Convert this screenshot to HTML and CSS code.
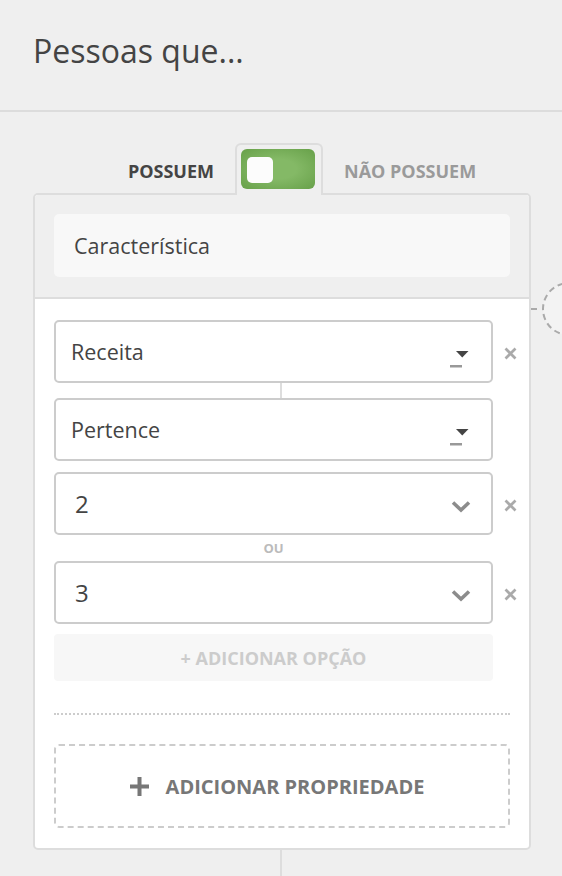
FILE: index.html
```html
<!DOCTYPE html>
<html lang="pt-BR">

<head>
    <meta charset="UTF-8">
    <meta name="viewport" content="width=device-width, initial-scale=1.0">
    <title>Pessoas que...</title>
    <link rel="stylesheet" href="styles.css">
</head>

<body>
    <header class="page-header">
        <h1>Pessoas que...</h1>
    </header>

    <main class="builder">
        <div class="switch-row">
            <span class="switch-label active">POSSUEM</span>
            <div class="switch-tab">
                <div class="switch"><span class="knob"></span></div>
            </div>
            <span class="switch-label">NÃO POSSUEM</span>
        </div>

        <section class="card">
            <div class="card-top">
                <div class="field">Característica</div>
            </div>

            <div class="card-body">
                <div class="select-row">
                    <div class="select">
                        <span>Receita</span>
                        <svg class="caret" width="19" height="17" viewBox="0 0 19 17">
                            <polygon points="6,0 18.5,0 12.25,6.5" fill="#444" />
                            <rect x="0" y="14" width="12" height="2.5" fill="#999" />
                        </svg>
                    </div>
                    <span class="remove">
                        <svg width="13" height="13" viewBox="0 0 13 13">
                            <path d="M1.5 1.5 L11.5 11.5 M11.5 1.5 L1.5 11.5" stroke="#aaa" stroke-width="2.7" />
                        </svg>
                    </span>
                </div>

                <div class="link"></div>

                <div class="select-row">
                    <div class="select">
                        <span>Pertence</span>
                        <svg class="caret" width="19" height="17" viewBox="0 0 19 17">
                            <polygon points="6,0 18.5,0 12.25,6.5" fill="#444" />
                            <rect x="0" y="14" width="12" height="2.5" fill="#999" />
                        </svg>
                    </div>
                </div>

                <div class="select-row spaced">
                    <div class="select number">
                        <span>2</span>
                        <svg class="chevron" width="20" height="13" viewBox="0 0 20 13">
                            <path d="M2 2.5 L10 10 L18 2.5" fill="none" stroke="#8c8c8c" stroke-width="3.6" />
                        </svg>
                    </div>
                    <span class="remove">
                        <svg width="13" height="13" viewBox="0 0 13 13">
                            <path d="M1.5 1.5 L11.5 11.5 M11.5 1.5 L1.5 11.5" stroke="#aaa" stroke-width="2.7" />
                        </svg>
                    </span>
                </div>

                <div class="or">OU</div>

                <div class="select-row">
                    <div class="select number">
                        <span>3</span>
                        <svg class="chevron" width="20" height="13" viewBox="0 0 20 13">
                            <path d="M2 2.5 L10 10 L18 2.5" fill="none" stroke="#8c8c8c" stroke-width="3.6" />
                        </svg>
                    </div>
                    <span class="remove">
                        <svg width="13" height="13" viewBox="0 0 13 13">
                            <path d="M1.5 1.5 L11.5 11.5 M11.5 1.5 L1.5 11.5" stroke="#aaa" stroke-width="2.7" />
                        </svg>
                    </span>
                </div>

                <div class="add-option">+ ADICIONAR OPÇÃO</div>

                <hr class="dotted">

                <div class="add-property">
                    <svg width="19" height="19" viewBox="0 0 19 19">
                        <rect x="7.5" y="0" width="4" height="19" fill="#777" />
                        <rect x="0" y="7.5" width="19" height="4" fill="#777" />
                    </svg>
                    <span>ADICIONAR PROPRIEDADE</span>
                </div>
            </div>
        </section>

        <div class="tail"></div>

        <!-- next node of the flow, cut off by the window -->
        <svg class="next-node" width="31" height="60" viewBox="0 0 31 60">
            <line x1="0" y1="29" x2="9" y2="29" stroke="#aaa" stroke-width="2" stroke-dasharray="6 4" />
            <circle cx="38" cy="29" r="26" fill="#f3f3f3" stroke="#aaa" stroke-width="2" stroke-dasharray="6 4" />
        </svg>
    </main>
</body>
</html>
```

FILE: styles.css
```css
* {
    box-sizing: border-box;
}

body {
    margin: 0;
    height: 876px;
    overflow: hidden;
    background-color: #efefef;
    font-family: "Open Sans", sans-serif;
    color: #444;
}

.page-header {
    height: 112px;
    padding: 0 33px;
    border-bottom: 2px solid #dcdcdc;
}

.page-header h1 {
    margin: 0;
    padding-top: 29px;
    font-size: 32px;
    font-weight: 400;
    line-height: 44px;
    color: #444;
}

.builder {
    position: relative;
    padding: 31px 31px 0 33px;
}

/* Possuem / Nao possuem switch */
.switch-row {
    display: grid;
    grid-template-columns: 1fr auto 1fr;
    align-items: center;
    column-gap: 21px;
    padding-right: 6px;
}

.switch-label {
    padding-top: 6px;
    font-size: 18px;
    font-weight: 700;
    line-height: 24px;
    color: #9a9a9a;
}

.switch-label.active {
    justify-self: end;
    color: #444;
}

.switch-tab {
    position: relative;
    z-index: 1;
    width: 88px;
    height: 52px;
    margin-bottom: -2px;
    padding: 4px;
    background-color: #efefef;
    border: 2px solid #ddd;
    border-bottom: none;
    border-radius: 6px 6px 0 0;
}

.switch {
    width: 74px;
    height: 40px;
    padding: 8px 0 0 6px;
    border-radius: 6px;
    background: radial-gradient(ellipse at center, #84b966 35%, #67a049 100%);
}

.knob {
    display: block;
    width: 26px;
    height: 26px;
    border-radius: 5px;
    background-color: #fcfcfc;
}

/* Card */
.card {
    overflow: hidden;
    background-color: #fff;
    border: 2px solid #ddd;
    border-radius: 5px;
}

.card-top {
    padding: 19px 19px 20px;
    background-color: #efefef;
    border-bottom: 2px solid #ddd;
}

.field {
    display: flex;
    align-items: center;
    height: 63px;
    padding-left: 20px;
    background-color: #f8f8f8;
    border-radius: 5px;
    font-size: 21.5px;
}

.card-body {
    padding: 21px 19px 20px;
}

.select-row {
    display: grid;
    grid-template-columns: 439px 1fr;
    align-items: center;
    margin-right: -19px;
}

.select-row.spaced {
    margin-top: 11px;
}

.select {
    display: flex;
    align-items: center;
    justify-content: space-between;
    height: 63px;
    padding: 0 22px 0 15px;
    border: 2px solid #ccc;
    border-radius: 5px;
    font-size: 21.5px;
}

.select .caret {
    margin-top: 15px;
}

.select.number {
    padding: 0 20px 0 19px;
    font-size: 24px;
}

.select .chevron {
    margin-top: 6px;
}

.remove {
    display: flex;
    justify-content: center;
    width: 34px;
    padding-top: 4px;
}

.link {
    width: 2px;
    height: 15px;
    margin: 0 auto 0 226px;
    background-color: #ddd;
}

.or {
    width: 439px;
    height: 26px;
    font-size: 13px;
    font-weight: 700;
    line-height: 26px;
    text-align: center;
    color: #bbb;
}

.add-option {
    display: flex;
    align-items: center;
    justify-content: center;
    width: 439px;
    height: 47px;
    margin-top: 10px;
    background-color: #f7f7f7;
    border-radius: 4px;
    font-size: 18px;
    font-weight: 700;
    color: #ccc;
}

.dotted {
    height: 0;
    margin: 32px 0 0;
    border: none;
    border-top: 2px dotted #ccc;
}

.add-property {
    display: flex;
    align-items: center;
    justify-content: center;
    gap: 17px;
    height: 84px;
    margin-top: 29px;
    padding-right: 10px;
    border: 2px dashed #ccc;
    border-radius: 5px;
    font-size: 20px;
    font-weight: 700;
    color: #777;
}

.tail {
    width: 2px;
    height: 26px;
    margin-left: 247px;
    background-color: #ddd;
}

.next-node {
    position: absolute;
    top: 168px;
    right: 0;
}
```
